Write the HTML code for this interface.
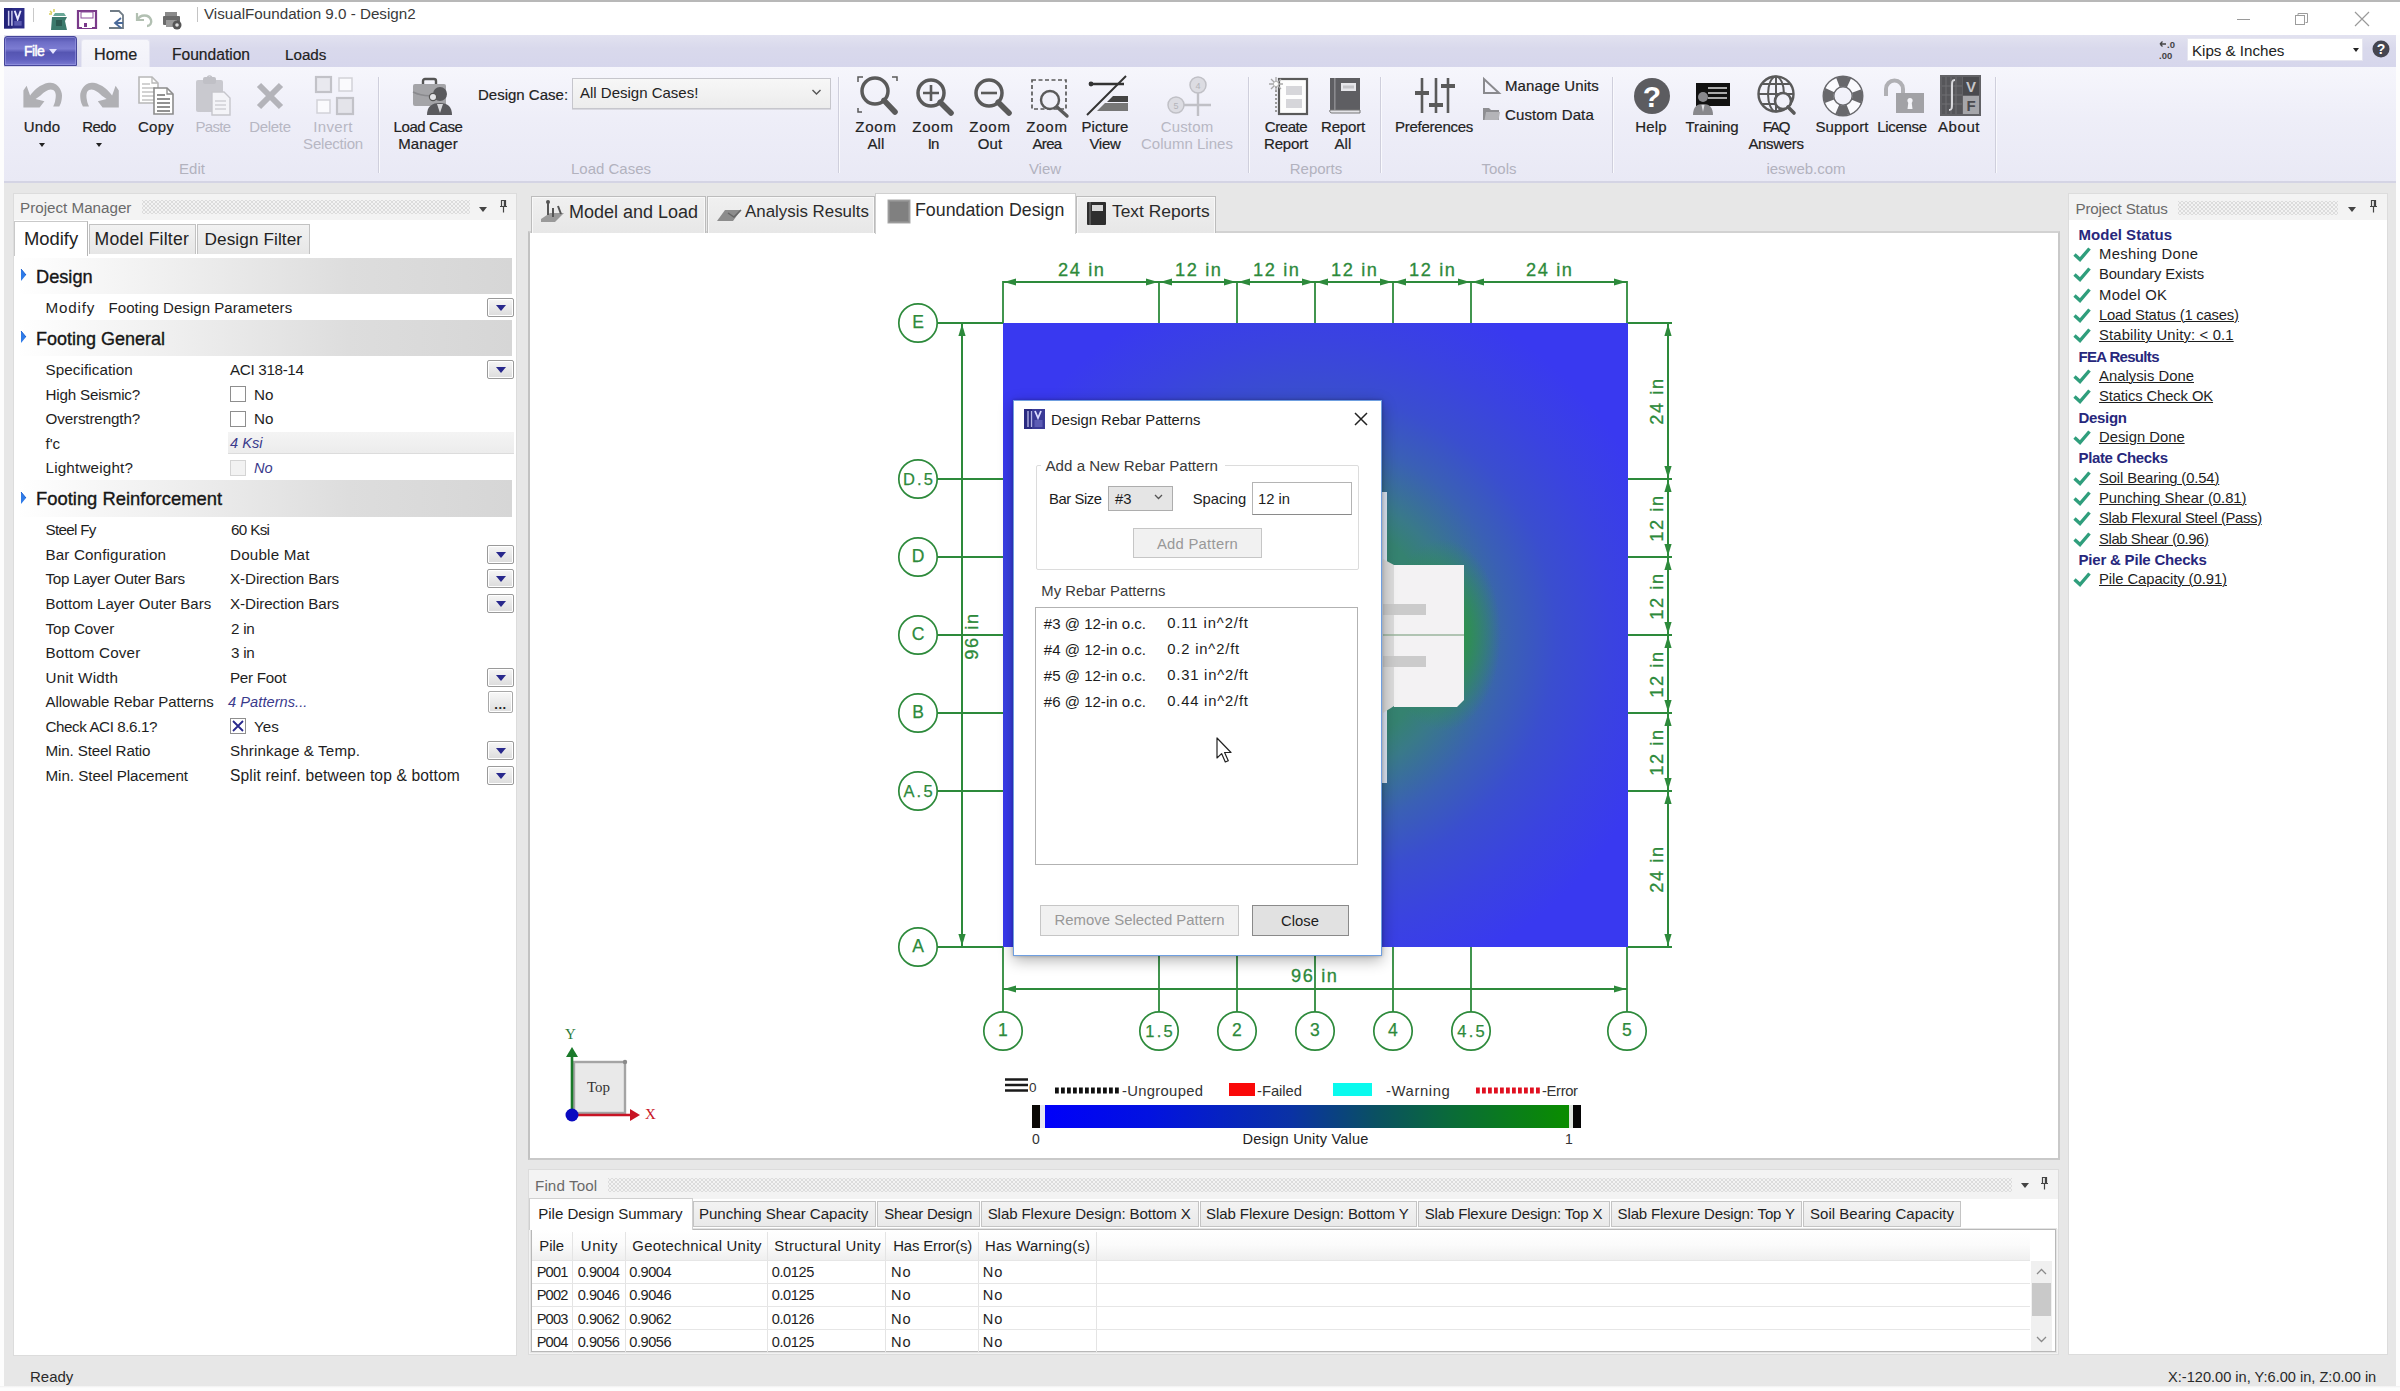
<!DOCTYPE html>
<html>
<head>
<meta charset="utf-8">
<title>VisualFoundation 9.0 - Design2</title>
<style>
*{box-sizing:border-box;margin:0;padding:0}
html,body{width:2400px;height:1391px;overflow:hidden;background:#e7e7e7}
body{font-family:"Liberation Sans",sans-serif;font-size:15px;color:#1a1a1a;position:relative}
.abs{position:absolute}
.t{position:absolute;white-space:pre;line-height:1}
.sb{-webkit-text-stroke:0.35px currentColor}
svg{position:absolute;overflow:visible}
.rl{position:absolute;white-space:pre;line-height:17px;font-size:15px;text-align:center;color:#222;transform:translateX(-50%);-webkit-text-stroke:0.2px currentColor}
.rl.dis{color:#b7b7c3;-webkit-text-stroke:0}
.gl{position:absolute;white-space:pre;font-size:15px;color:#b2b2be;transform:translateX(-50%);line-height:1}
.sep{position:absolute;width:2px;top:77px;height:96px;background:linear-gradient(90deg,#cfcfdc 50%,#f9f9fd 50%)}
.dots{position:absolute;height:14px;background-image:radial-gradient(circle,#dcdcdc 0.8px,transparent 1.25px),radial-gradient(circle,#dcdcdc 0.8px,transparent 1.25px);background-size:4px 4px;background-position:0 0,2px 2px}
.ddb{position:absolute;width:27px;height:19px;border:1px solid #9a9a9a;border-radius:2px;background:linear-gradient(#f6f6f6,#dcdcdc);box-shadow:inset 0 0 0 1px #fff}
.ddb:after{content:"";position:absolute;left:8px;top:6px;border:5px solid transparent;border-top:6px solid #28288c;border-bottom:0}
.hdr{position:absolute;left:18px;width:494px;background:linear-gradient(90deg,#fff 0%,#f6f6f6 17%,#e7e7e7 47%,#dddddd 67%,#d6d6d6 100%)}
.cb{position:absolute;width:16px;height:16px;border:1px solid #8e8e8e;background:#fff}
.tab{position:absolute;border:1px solid #c2c2c2;border-bottom:none;background:linear-gradient(#f2f2f2,#e6e6e6)}
.tab.act{background:#fff;border-color:#d4d4d4}
.lnk{text-decoration:underline;text-decoration-thickness:1px;text-underline-offset:1px}
.btn{position:absolute;border:1px solid #adadad;background:#e1e1e1;text-align:center;white-space:pre}
</style>
</head>
<body>

<div class="abs" style="left:0px;top:0px;width:2400px;height:35px;background:#fff;border-top:2px solid #b8b8b8"></div>
<div class="abs" style="left:0px;top:35px;width:4px;height:1356px;background:#fdfdfd"></div>
<div class="abs" style="left:2396px;top:35px;width:4px;height:1356px;background:#fdfdfd"></div>
<div class="abs" style="left:0px;top:1386px;width:2400px;height:5px;background:linear-gradient(#f0f0f0,#fdfdfd 40%)"></div>
<svg style="left:4px;top:8px" width="22" height="22" viewBox="0 0 22 22"><g transform="scale(0.93)"><rect x="0" y="0" width="22" height="22" fill="#2b2b86"/><rect x="0" y="0" width="9" height="22" fill="#232378"/><path d="M5 3v16M8.5 3v16" stroke="#c9c9ee" stroke-width="1.6" fill="none"/><path d="M11.5 3l3.2 9 3.2-9" stroke="#e8e8ff" stroke-width="2" fill="none"/><rect x="11" y="14" width="8" height="5" fill="#5a5ab0"/></g></svg>
<div class="abs" style="left:33px;top:8px;width:1px;height:14px;background:#c9c9c9"></div>
<svg style="left:48px;top:8px" width="22" height="24" viewBox="0 0 22 24"><path d="M4 9h15l-2 4 2 9H3z" fill="#3c7a6c"/><path d="M5 8l2-3h9l2 3" fill="#6aa898"/><path d="M2 3l2 2M6 1l0 3M1 6l3 0" stroke="#d8d060" stroke-width="1.5"/><rect x="8" y="12" width="6" height="6" fill="#2c5a50"/></svg>
<svg style="left:77px;top:10px" width="20" height="19" viewBox="0 0 20 19"><path d="M1 1h18v17H1z" fill="none" stroke="#7a3a8a" stroke-width="2.2"/><rect x="4" y="2" width="12" height="6" fill="#fff" stroke="#8a4a9a" stroke-width="1"/><rect x="5" y="12" width="10" height="6" fill="#fff"/><rect x="7" y="13" width="3" height="4" fill="#7a3a8a"/></svg>
<svg style="left:108px;top:10px" width="17" height="19" viewBox="0 0 17 19"><path d="M2 1h9l4 4v13H1" fill="none" stroke="#707c86" stroke-width="1.8"/><path d="M13 8l-6 5 6 5M8 13h7" fill="none" stroke="#4a6a9a" stroke-width="1.8"/></svg>
<svg style="left:134px;top:12px" width="19" height="15" viewBox="0 0 19 15"><path d="M3 1v7h7" fill="none" stroke="#b2c0b2" stroke-width="2.2"/><path d="M3.5 8C6 2 15 2 17 8c1 3-1 6-4 6" fill="none" stroke="#b2c0b2" stroke-width="2.4"/></svg>
<svg style="left:162px;top:10px" width="22" height="20" viewBox="0 0 22 20"><rect x="3" y="2" width="12" height="6" fill="#8a8a8a"/><rect x="1" y="6" width="17" height="9" rx="1" fill="#6a6a6a"/><rect x="4" y="10" width="11" height="7" fill="#9a9a9a"/><circle cx="15" cy="15" r="4.5" fill="#555"/><circle cx="15" cy="15" r="1.8" fill="#ddd"/></svg>
<div class="abs" style="left:197px;top:7px;width:1px;height:15px;background:#c4c4c4"></div>
<div class="t" style="left:204px;top:6.0px;font-size:15.2px;color:#3a3a3a;">VisualFoundation 9.0 - Design2</div>
<div class="abs" style="left:2237px;top:19px;width:13px;height:1px;background:#9a9a9a"></div>
<svg style="left:2295px;top:13px" width="13" height="12" viewBox="0 0 13 12"><rect x="0.5" y="2.5" width="9" height="9" fill="none" stroke="#9c9c9c" stroke-width="1"/><path d="M3 2.5v-2h9.5v9h-2" fill="none" stroke="#9c9c9c" stroke-width="1"/></svg>
<svg style="left:2354px;top:11px" width="16" height="16" viewBox="0 0 16 16"><path d="M1 1l14 14M15 1L1 15" stroke="#9a9a9a" stroke-width="1.2"/></svg>
<div class="abs" style="left:4px;top:35px;width:2392px;height:33px;background:linear-gradient(#e2e2f0,#d9d9ec 40%,#d6d6ec)"></div>
<div class="abs" style="left:4px;top:36px;width:73px;height:30px;background:linear-gradient(#5252ac 0%,#6d6dc6 18%,#7c7cd2 42%,#5555b2 55%,#5f5fbe 80%,#7a7ad2 100%);border:1px solid #46469a;border-radius:3px 3px 0 0;box-shadow:inset 0 0 0 1px rgba(160,160,230,.55)"></div>
<div class="t" style="left:24px;top:43.9px;font-size:14px;color:#fff;-webkit-text-stroke:0.45px #fff;letter-spacing:-0.6px">File</div>
<div class="abs" style="left:49px;top:49px;border:4.5px solid transparent;border-top:5px solid #e6e6ff;border-bottom:0"></div>
<div class="abs" style="left:81px;top:39px;width:69px;height:30px;background:linear-gradient(#f6f6fb,#f1f1f9);border-radius:3px 3px 0 0;border:1px solid #e6e6f2;border-bottom:none"></div>
<div class="t" style="left:94px;top:46.3px;font-size:16.2px;color:#222;-webkit-text-stroke:0.2px #222">Home</div>
<div class="t" style="left:172px;top:46.6px;font-size:15.6px;color:#222;-webkit-text-stroke:0.2px #222">Foundation</div>
<div class="t" style="left:285px;top:46.8px;font-size:15.2px;color:#222;-webkit-text-stroke:0.2px #222">Loads</div>
<svg style="left:2157px;top:39px" width="22" height="22" viewBox="0 0 22 22"><path d="M3 5h6M3 5l2.500-2.500M3 5l2.500 2.500" stroke="#444" stroke-width="1.300" fill="none"/><text x="10" y="9" font-size="9.500" font-family="Liberation Sans" font-weight="bold" fill="#444">.0</text><text x="2" y="20" font-size="9.500" font-family="Liberation Sans" font-weight="bold" fill="#444">.00</text></svg>
<div class="abs" style="left:2187px;top:38px;width:176px;height:23px;background:#fff;border:1px solid #e6e6f0"></div>
<div class="t" style="left:2192px;top:43.3px;font-size:15.2px;color:#222;letter-spacing:-0.04px;">Kips &amp; Inches</div>
<div class="abs" style="left:2353px;top:48px;border:3.500px solid transparent;border-top:4px solid #222;border-bottom:0"></div>
<svg style="left:2372px;top:40px" width="18" height="18" viewBox="0 0 18 18"><circle cx="9" cy="9" r="8.5" fill="#45454f"/><text x="9" y="14" text-anchor="middle" font-size="14" font-weight="bold" font-family="Liberation Sans" fill="#fff">?</text></svg>
<div class="abs" style="left:4px;top:67px;width:2392px;height:116px;background:linear-gradient(#f6f6fc,#eeeef8 45%,#e9e9f5 100%);border-bottom:2px solid #d4d4e4"></div>
<svg style="left:0px;top:0px" width="1" height="1" viewBox="0 0 1 1"><path d="M23.400 107.400L23.400 90.600L26.600 85.800L30.100 95.600C34 90 39 86 43.200 84.500C46 83 48.500 82.800 50.700 82.800C55 83 58 85.500 59.500 88.100C61 90.500 62 93 62 95.600C62 98.500 61.500 101 60.800 103.200L59.300 106.400L53.200 106.400C54.500 104 55 102 55.200 100.600C55.700 98 55.900 96 55.700 94.400C55.300 92 54.500 91 53.200 90.100C51.500 89.300 50 89.300 48.200 90.100C45 91.500 42.500 93.500 40.600 95.600L35.600 99.100L44.400 101.200L39.600 107.400Z" fill="#b0b0b4"/></svg>
<div class="t" style="left:42px;top:119.2px;font-size:15px;color:#222;transform:translateX(-50%);-webkit-text-stroke:0.2px #222;letter-spacing:0.18px;">Undo</div>
<div class="abs" style="left:38.5px;top:143px;border:3.500px solid transparent;border-top:4px solid #222;border-bottom:0"></div>
<svg style="left:0px;top:0px" width="1" height="1" viewBox="0 0 1 1"><g transform="translate(142.200,0) scale(-1,1)"><path d="M23.400 107.400L23.400 90.600L26.600 85.800L30.100 95.600C34 90 39 86 43.200 84.500C46 83 48.500 82.800 50.700 82.800C55 83 58 85.500 59.500 88.100C61 90.500 62 93 62 95.600C62 98.500 61.500 101 60.800 103.200L59.300 106.400L53.200 106.400C54.500 104 55 102 55.200 100.600C55.700 98 55.900 96 55.700 94.400C55.300 92 54.500 91 53.200 90.100C51.500 89.300 50 89.300 48.200 90.100C45 91.500 42.500 93.500 40.600 95.600L35.600 99.100L44.400 101.200L39.600 107.400Z" fill="#b0b0b4"/></g></svg>
<div class="t" style="left:99px;top:119.2px;font-size:15px;color:#222;transform:translateX(-50%);-webkit-text-stroke:0.2px #222;letter-spacing:-0.62px;">Redo</div>
<div class="abs" style="left:95.5px;top:143px;border:3.500px solid transparent;border-top:4px solid #222;border-bottom:0"></div>
<svg style="left:138px;top:76px" width="22" height="28" viewBox="0 0 22 28"><path d="M1 1h13l6 6v20H1z" fill="#fff" stroke="#b8b8b8" stroke-width="1.6"/><path d="M14 1v6h6" fill="none" stroke="#b8b8b8" stroke-width="1.3"/><path d="M4 8h8M4 12h13M4 16h13M4 20h13M4 24h13" stroke="#c4c4c4" stroke-width="1.5"/></svg>
<svg style="left:153px;top:87px" width="22" height="28" viewBox="0 0 22 28"><path d="M1 1h13l6 6v20H1z" fill="#fff" stroke="#8c8c8c" stroke-width="1.6"/><path d="M14 1v6h6" fill="none" stroke="#8c8c8c" stroke-width="1.3"/><path d="M4 8h8M4 12h13M4 16h13M4 20h13M4 24h13" stroke="#6e6e6e" stroke-width="1.5"/></svg>
<div class="t" style="left:156px;top:119.2px;font-size:15px;color:#222;transform:translateX(-50%);-webkit-text-stroke:0.2px #222;letter-spacing:0.23px;">Copy</div>
<svg style="left:195px;top:75px" width="38" height="41" viewBox="0 0 38 41"><rect x="1" y="5" width="27" height="32" rx="2" fill="#c9c9cf"/><rect x="8" y="2" width="13" height="7" rx="2" fill="#c0c0c6"/><circle cx="14.5" cy="3" r="2.2" fill="none" stroke="#c0c0c6" stroke-width="1.3"/><path d="M17 17h12l6 6v17H17z" fill="#f4f4f8" stroke="#c6c6cc" stroke-width="1.4"/><path d="M20 26h11M20 30h11M20 34h11" stroke="#cfcfd5" stroke-width="1.4"/></svg>
<div class="t" style="left:213px;top:119.2px;font-size:15px;color:#b7b7c3;transform:translateX(-50%);letter-spacing:-0.64px;">Paste</div>
<svg style="left:256px;top:82px" width="28" height="28" viewBox="0 0 28 28"><path d="M3 3L25 25M25 3L3 25" stroke="#b4b4ba" stroke-width="6"/></svg>
<div class="t" style="left:270px;top:119.2px;font-size:15px;color:#b7b7c3;transform:translateX(-50%);letter-spacing:-0.31px;">Delete</div>
<svg style="left:314px;top:75px" width="42" height="42" viewBox="0 0 42 42"><rect x="2" y="2" width="15" height="15" fill="#e9e9ef" stroke="#c2c2c8" stroke-width="2.2"/><rect x="25" y="3" width="13" height="13" fill="#fafafd" stroke="#d2d2d8" stroke-width="1.5"/><rect x="3" y="25" width="13" height="13" fill="#fafafd" stroke="#d2d2d8" stroke-width="1.5"/><rect x="23" y="23" width="16" height="16" fill="#e4e4ea" stroke="#c2c2c8" stroke-width="2.2"/></svg>
<div class="t" style="left:333px;top:119.2px;font-size:15px;color:#b7b7c3;transform:translateX(-50%);letter-spacing:0.30px;">Invert</div>
<div class="t" style="left:333px;top:136.0px;font-size:15px;color:#b7b7c3;transform:translateX(-50%);letter-spacing:-0.21px;">Selection</div>
<div class="gl" style="left:192px;top:161px">Edit</div>
<div class="sep" style="left:378px"></div>
<svg style="left:411px;top:77px" width="42" height="40" viewBox="0 0 42 40"><path d="M12 7v-3a2 2 0 0 1 2-2h9a2 2 0 0 1 2 2v3" fill="none" stroke="#555" stroke-width="2.4"/><rect x="2" y="7" width="33" height="22" rx="2" fill="#a4a4a8"/><path d="M2 15c10 5 23 5 33 0" fill="none" stroke="#8a8a8e" stroke-width="1.4"/><circle cx="29" cy="17" r="7" fill="#5a5a5e"/><path d="M16 38c0-9 5-12 13-12s12 4 12 12z" fill="#5a5a5e"/><path d="M26 27l3 9 3-9z" fill="#d8d8dc"/><circle cx="22" cy="20" r="3.6" fill="#e4e4e8" stroke="#555" stroke-width="1.2"/></svg>
<div class="t" style="left:428px;top:119.2px;font-size:15px;color:#222;transform:translateX(-50%);-webkit-text-stroke:0.2px #222;letter-spacing:-0.39px;">Load Case</div>
<div class="t" style="left:428px;top:136.0px;font-size:15px;color:#222;transform:translateX(-50%);-webkit-text-stroke:0.2px #222;letter-spacing:0.03px;">Manager</div>
<div class="t" style="left:478px;top:86.9px;font-size:15px;color:#222;-webkit-text-stroke:0.2px #222">Design Case:</div>
<div class="abs" style="left:572px;top:78px;width:259px;height:31px;background:linear-gradient(#f7f7f7,#ececec);border:1px solid #c6c6cc;box-shadow:0 1px 0 #d8d8e0"></div>
<div class="t" style="left:580px;top:84.9px;font-size:15px;color:#222;">All Design Cases!</div>
<svg style="left:811px;top:89px" width="11" height="7" viewBox="0 0 11 7"><path d="M1.5 1l4 4 4-4" fill="none" stroke="#555" stroke-width="1.4"/></svg>
<div class="gl" style="left:611px;top:161px">Load Cases</div>
<div class="sep" style="left:838px"></div>
<svg style="left:0px;top:0px" width="1" height="1" viewBox="0 0 1 1"><circle cx="875" cy="91" r="13" fill="none" stroke="#5a5a5a" stroke-width="3.5"/><path d="M884.0 100.4L895 112" stroke="#5a5a5a" stroke-width="5.6" stroke-linecap="round"/><path d="M858 82v-5h5M892 77h5v4M858 108v4h4" fill="none" stroke="#5a5a5a" stroke-width="1.5"/></svg>
<div class="t" style="left:876px;top:119.2px;font-size:15px;color:#222;transform:translateX(-50%);-webkit-text-stroke:0.2px #222;letter-spacing:0.82px;">Zoom</div>
<div class="t" style="left:876px;top:136.0px;font-size:15px;color:#222;transform:translateX(-50%);-webkit-text-stroke:0.2px #222;letter-spacing:0.16px;">All</div>
<svg style="left:0px;top:0px" width="1" height="1" viewBox="0 0 1 1"><circle cx="931" cy="93" r="13" fill="none" stroke="#5a5a5a" stroke-width="3.5"/><path d="M940.2 102.2L951 113" stroke="#5a5a5a" stroke-width="5.6" stroke-linecap="round"/><path d="M923 93h16M931 85v16" stroke="#5a5a5a" stroke-width="2.6"/></svg>
<div class="t" style="left:933px;top:119.2px;font-size:15px;color:#222;transform:translateX(-50%);-webkit-text-stroke:0.2px #222;letter-spacing:0.82px;">Zoom</div>
<div class="t" style="left:933px;top:136.0px;font-size:15px;color:#222;transform:translateX(-50%);-webkit-text-stroke:0.2px #222;letter-spacing:-1.11px;">In</div>
<svg style="left:0px;top:0px" width="1" height="1" viewBox="0 0 1 1"><circle cx="989" cy="93" r="13" fill="none" stroke="#5a5a5a" stroke-width="3.5"/><path d="M998.2 102.2L1009 113" stroke="#5a5a5a" stroke-width="5.6" stroke-linecap="round"/><path d="M981 93h16" stroke="#5a5a5a" stroke-width="2.6"/></svg>
<div class="t" style="left:990px;top:119.2px;font-size:15px;color:#222;transform:translateX(-50%);-webkit-text-stroke:0.2px #222;letter-spacing:0.82px;">Zoom</div>
<div class="t" style="left:990px;top:136.0px;font-size:15px;color:#222;transform:translateX(-50%);-webkit-text-stroke:0.2px #222;letter-spacing:0.16px;">Out</div>
<svg style="left:0px;top:0px" width="1" height="1" viewBox="0 0 1 1"><rect x="1032" y="80" width="34" height="29" fill="none" stroke="#5a5a5a" stroke-width="1.7" stroke-dasharray="4 2.5"/><circle cx="1050" cy="100" r="9" fill="#f0f0f8" stroke="#5a5a5a" stroke-width="2.4"/><path d="M1057 107l10 9" stroke="#5a5a5a" stroke-width="3.4" stroke-linecap="round"/></svg>
<div class="t" style="left:1047px;top:119.2px;font-size:15px;color:#222;transform:translateX(-50%);-webkit-text-stroke:0.2px #222;letter-spacing:0.82px;">Zoom</div>
<div class="t" style="left:1047px;top:136.0px;font-size:15px;color:#222;transform:translateX(-50%);-webkit-text-stroke:0.2px #222;letter-spacing:-0.63px;">Area</div>
<svg style="left:0px;top:0px" width="1" height="1" viewBox="0 0 1 1"><path d="M1091 84h33" stroke="#333" stroke-width="2.6"/><circle cx="1091" cy="84" r="2.4" fill="#333"/><path d="M1126 76L1087 115" stroke="#333" stroke-width="2"/><path d="M1113 96h15v6h-21z" fill="#444"/><path d="M1105 103h23v8h-31z" fill="#777"/></svg>
<div class="t" style="left:1105px;top:119.2px;font-size:15px;color:#222;transform:translateX(-50%);-webkit-text-stroke:0.2px #222;letter-spacing:0.04px;">Picture</div>
<div class="t" style="left:1105px;top:136.0px;font-size:15px;color:#222;transform:translateX(-50%);-webkit-text-stroke:0.2px #222;letter-spacing:-0.25px;">View</div>
<svg style="left:0px;top:0px" width="1" height="1" viewBox="0 0 1 1"><circle cx="1198" cy="85" r="8" fill="#dcdce2" stroke="#c0c0c6" stroke-width="1.5"/><circle cx="1176" cy="105" r="8" fill="#dcdce2" stroke="#c0c0c6" stroke-width="1.5"/><path d="M1198 93v23M1184 105h27" stroke="#c0c0c6" stroke-width="2.4"/><text x="1198" y="89" font-size="9" text-anchor="middle" fill="#b4b4ba" font-family="Liberation Sans">4</text><text x="1176" y="109" font-size="9" text-anchor="middle" fill="#b4b4ba" font-family="Liberation Sans">5</text></svg>
<div class="t" style="left:1187px;top:119.2px;font-size:15px;color:#b7b7c3;transform:translateX(-50%);letter-spacing:0.16px;">Custom</div>
<div class="t" style="left:1187px;top:136.0px;font-size:15px;color:#b7b7c3;transform:translateX(-50%);letter-spacing:0.02px;">Column Lines</div>
<div class="gl" style="left:1045px;top:161px">View</div>
<div class="sep" style="left:1248px"></div>
<svg style="left:0px;top:0px" width="1" height="1" viewBox="0 0 1 1"><rect x="1279" y="79" width="28" height="35" fill="#fdfdfd" stroke="#5a5a5a" stroke-width="2.2"/><rect x="1286" y="86" width="16" height="9" fill="#d6d6da"/><rect x="1286" y="99" width="16" height="9" fill="#d6d6da"/><path d="M1276 82v30" stroke="#999" stroke-width="2" stroke-dasharray="2 2"/><path d="M1276 77v14M1269 84h14M1271 79l10 10M1281 79l-10 10" stroke="#a8a8a8" stroke-width="1.3"/><circle cx="1276" cy="84" r="2.6" fill="#fff" stroke="#aaa" stroke-width="0.8"/></svg>
<div class="t" style="left:1286px;top:119.2px;font-size:15px;color:#222;transform:translateX(-50%);-webkit-text-stroke:0.2px #222;letter-spacing:-0.42px;">Create</div>
<div class="t" style="left:1286px;top:136.0px;font-size:15px;color:#222;transform:translateX(-50%);-webkit-text-stroke:0.2px #222;letter-spacing:-0.16px;">Report</div>
<svg style="left:0px;top:0px" width="1" height="1" viewBox="0 0 1 1"><path d="M1330 78h30v32h-30z" fill="#5e5e62"/><path d="M1330 110h30v3h-28a2 2 0 0 1 -2-3z" fill="#e4e4e8" stroke="#777" stroke-width="1"/><rect x="1334" y="78" width="1.6" height="32" fill="#8a8a8e"/><rect x="1341" y="83" width="15" height="8" fill="#e6e6ea"/><rect x="1343" y="85.5" width="11" height="3" fill="#c4c4c8"/></svg>
<div class="t" style="left:1343px;top:119.2px;font-size:15px;color:#222;transform:translateX(-50%);-webkit-text-stroke:0.2px #222;letter-spacing:-0.16px;">Report</div>
<div class="t" style="left:1343px;top:136.0px;font-size:15px;color:#222;transform:translateX(-50%);-webkit-text-stroke:0.2px #222;letter-spacing:0.16px;">All</div>
<div class="gl" style="left:1316px;top:161px">Reports</div>
<div class="sep" style="left:1380px"></div>
<svg style="left:0px;top:0px" width="1" height="1" viewBox="0 0 1 1"><path d="M1422 78v35M1436 78v35M1448 78v35" stroke="#5a5a5a" stroke-width="2.6"/><path d="M1415 93h14M1429 105h14M1441 86h14" stroke="#5a5a5a" stroke-width="4.2"/></svg>
<div class="t" style="left:1434px;top:119.2px;font-size:15px;color:#222;transform:translateX(-50%);-webkit-text-stroke:0.2px #222;letter-spacing:-0.25px;">Preferences</div>
<svg style="left:0px;top:0px" width="1" height="1" viewBox="0 0 1 1"><path d="M1484 79v14h15z" fill="none" stroke="#8a8a8e" stroke-width="2"/></svg>
<div class="t" style="left:1505px;top:78.4px;font-size:15px;color:#222;-webkit-text-stroke:0.2px #222;letter-spacing:0.12px;">Manage Units</div>
<svg style="left:0px;top:0px" width="1" height="1" viewBox="0 0 1 1"><path d="M1483 108h6l2 2h8v10h-16z" fill="#8e8e92"/><path d="M1486 112h14l-1.5 8h-14z" fill="#b4b4b8"/></svg>
<div class="t" style="left:1505px;top:106.9px;font-size:15px;color:#222;-webkit-text-stroke:0.2px #222;letter-spacing:0.12px;">Custom Data</div>
<div class="gl" style="left:1499px;top:161px">Tools</div>
<div class="sep" style="left:1612px"></div>
<svg style="left:0px;top:0px" width="1" height="1" viewBox="0 0 1 1"><circle cx="1652" cy="96" r="18" fill="#5c5c60"/><text x="1652" y="107" font-size="30" font-weight="bold" text-anchor="middle" fill="#fff" font-family="Liberation Sans">?</text></svg>
<div class="t" style="left:1651px;top:119.2px;font-size:15px;color:#222;transform:translateX(-50%);-webkit-text-stroke:0.2px #222;letter-spacing:0.12px;">Help</div>
<svg style="left:0px;top:0px" width="1" height="1" viewBox="0 0 1 1"><rect x="1696" y="83" width="34" height="23" fill="#111"/><path d="M1708 88h19M1708 93h19M1708 98h19" stroke="#ddd" stroke-width="1.5"/><circle cx="1703" cy="97" r="5" fill="#88888c"/><path d="M1693 115c0-8 4-11 10-11s10 3 10 11z" fill="#88888c"/><path d="M1701.500 105l1.500 7 1.500-7z" fill="#e0e0e4"/></svg>
<div class="t" style="left:1712px;top:119.2px;font-size:15px;color:#222;transform:translateX(-50%);-webkit-text-stroke:0.2px #222;letter-spacing:-0.09px;">Training</div>
<svg style="left:0px;top:0px" width="1" height="1" viewBox="0 0 1 1"><circle cx="1776" cy="94" r="17.500" fill="none" stroke="#5a5a5a" stroke-width="2.4"/><ellipse cx="1776" cy="94" rx="8" ry="17.500" fill="none" stroke="#5a5a5a" stroke-width="2"/><path d="M1758.500 94h35M1776 76.500v35M1762 84h28M1762 104h28" stroke="#5a5a5a" stroke-width="2"/><circle cx="1783" cy="101" r="8" fill="#f0f0f8" stroke="#5a5a5a" stroke-width="2.6"/><path d="M1788 107l6 6" stroke="#5a5a5a" stroke-width="3.6" stroke-linecap="round"/></svg>
<div class="t" style="left:1776px;top:119.2px;font-size:15px;color:#222;transform:translateX(-50%);-webkit-text-stroke:0.2px #222;letter-spacing:-1.15px;">FAQ</div>
<div class="t" style="left:1776px;top:136.0px;font-size:15px;color:#222;transform:translateX(-50%);-webkit-text-stroke:0.2px #222;letter-spacing:-0.35px;">Answers</div>
<svg style="left:0px;top:0px" width="1" height="1" viewBox="0 0 1 1"><circle cx="1843" cy="96" r="14.500" fill="none" stroke="#fafafe" stroke-width="10"/><circle cx="1843" cy="96" r="14.500" fill="none" stroke="#68686c" stroke-width="10" stroke-dasharray="11.400 11.400" stroke-dashoffset="5.700"/><circle cx="1843" cy="96" r="19.800" fill="none" stroke="#68686c" stroke-width="1.400"/><circle cx="1843" cy="96" r="9.200" fill="none" stroke="#68686c" stroke-width="1.400"/></svg>
<div class="t" style="left:1842px;top:119.2px;font-size:15px;color:#222;transform:translateX(-50%);-webkit-text-stroke:0.2px #222;letter-spacing:0.08px;">Support</div>
<svg style="left:0px;top:0px" width="1" height="1" viewBox="0 0 1 1"><path d="M1886 96v-7a8.500 8.500 0 0 1 17 0v10" fill="none" stroke="#b0b0b4" stroke-width="4"/><rect x="1896" y="93" width="28" height="20" fill="#a2a2a6"/><circle cx="1910" cy="100.500" r="2.600" fill="#f4f4f8"/><path d="M1908.500 101h3l1 8h-5z" fill="#f4f4f8"/></svg>
<div class="t" style="left:1902px;top:119.2px;font-size:15px;color:#222;transform:translateX(-50%);-webkit-text-stroke:0.2px #222;letter-spacing:-0.30px;">License</div>
<svg style="left:0px;top:0px" width="1" height="1" viewBox="0 0 1 1"><rect x="1940" y="75" width="41" height="41" fill="#626266"/><rect x="1942" y="77" width="20" height="37" fill="#56565a"/><path d="M1946 77v37M1951 77v37M1956 77v37M1942 86h20M1942 95h20M1942 104h20" stroke="#6e6e72" stroke-width="1"/><path d="M1949 110c3 0 3-2 3-6v-18c0-4 0-6 3-6" fill="none" stroke="#d8d8dc" stroke-width="2"/><rect x="1963" y="77" width="16" height="18" fill="#4a4a4e"/><rect x="1963" y="96" width="16" height="18" fill="#a6a6aa"/><text x="1971" y="92" font-size="15" font-weight="bold" text-anchor="middle" fill="#c6c6ca" font-family="Liberation Sans">V</text><text x="1971" y="111" font-size="15" font-weight="bold" text-anchor="middle" fill="#4a4a4e" font-family="Liberation Sans">F</text></svg>
<div class="t" style="left:1959px;top:119.2px;font-size:15px;color:#222;transform:translateX(-50%);-webkit-text-stroke:0.2px #222;letter-spacing:0.60px;">About</div>
<div class="gl" style="left:1806px;top:161px">iesweb.com</div>
<div class="sep" style="left:1995px"></div>
<div class="abs" style="left:13px;top:193px;width:504px;height:1163px;background:#fff;border:1px solid #dcdcdc"></div>
<div class="abs" style="left:14px;top:194px;width:502px;height:26px;background:#f3f3f3"></div>
<div class="t" style="left:20px;top:200.3px;font-size:15.2px;color:#6a6a6a;">Project Manager</div>
<div class="dots" style="left:142px;top:200px;width:328px"></div>
<div class="abs" style="left:479px;top:207px;border:4.5px solid transparent;border-top:5px solid #444;border-bottom:0"></div>
<svg style="left:499px;top:200px" width="9" height="13" viewBox="0 0 9 13"><path d="M2.500 0.500h4v6h-4zM1 6.500h7M4.500 6.500v6" fill="none" stroke="#444" stroke-width="1.2"/><path d="M5.500 1v5" stroke="#444" stroke-width="1.4"/></svg>
<div class="tab" style="left:89px;top:224px;width:107px;height:30px"></div>
<div class="tab" style="left:197px;top:224px;width:113px;height:30px"></div>
<div class="tab act" style="left:14px;top:221px;width:74px;height:35px;border-color:#c9c9c9;border-right-color:#b6b6b6"></div>
<div class="t" style="left:24px;top:229.8px;font-size:18.4px;color:#222;">Modify</div>
<div class="t" style="left:94.5px;top:231.1px;font-size:17.6px;color:#222;letter-spacing:0.22px;">Model Filter</div>
<div class="t" style="left:204.5px;top:231.3px;font-size:17.2px;color:#222;letter-spacing:0.09px;">Design Filter</div>
<div class="hdr" style="top:258px;height:36px"></div>
<svg style="left:20px;top:268.0px" width="8" height="14" viewBox="0 0 8 14"><path d="M1 1l5 6-5 6z" fill="#2f7be8"/><path d="M1 1l5 6" stroke="#1a5fd0" stroke-width="1"/></svg>
<div class="t sb" style="left:36px;top:267.9px;font-size:18.2px;color:#161616;">Design</div>
<div class="hdr" style="top:320px;height:36px"></div>
<svg style="left:20px;top:330.0px" width="8" height="14" viewBox="0 0 8 14"><path d="M1 1l5 6-5 6z" fill="#2f7be8"/><path d="M1 1l5 6" stroke="#1a5fd0" stroke-width="1"/></svg>
<div class="t sb" style="left:36px;top:329.9px;font-size:18px;color:#161616;">Footing General</div>
<div class="hdr" style="top:480px;height:37px"></div>
<svg style="left:20px;top:490.5px" width="8" height="14" viewBox="0 0 8 14"><path d="M1 1l5 6-5 6z" fill="#2f7be8"/><path d="M1 1l5 6" stroke="#1a5fd0" stroke-width="1"/></svg>
<div class="t sb" style="left:36px;top:490.3px;font-size:18.4px;color:#161616;">Footing Reinforcement</div>
<div class="t" style="left:45.5px;top:300.3px;font-size:15.2px;color:#1e1e1e;letter-spacing:0.81px;">Modify</div>
<div class="t" style="left:108.6px;top:300.4px;font-size:15px;color:#1e1e1e;letter-spacing:0.04px;">Footing Design Parameters</div>
<div class="ddb" style="left:487px;top:298px"></div>
<div class="t" style="left:45.5px;top:362.3px;font-size:15.2px;color:#1e1e1e;letter-spacing:0.10px;">Specification</div>
<div class="t" style="left:230px;top:362.3px;font-size:15.2px;color:#1e1e1e;letter-spacing:-0.32px;">ACI 318-14</div>
<div class="ddb" style="left:487px;top:360.0px"></div>
<div class="t" style="left:45.5px;top:386.8px;font-size:15.2px;color:#1e1e1e;letter-spacing:-0.20px;">High Seismic?</div>
<div class="cb" style="left:230px;top:386px"></div>
<div class="t" style="left:254px;top:386.8px;font-size:15.2px;color:#1e1e1e;">No</div>
<div class="t" style="left:45.5px;top:411.3px;font-size:15.2px;color:#1e1e1e;letter-spacing:-0.13px;">Overstrength?</div>
<div class="cb" style="left:230px;top:410.5px"></div>
<div class="t" style="left:254px;top:411.3px;font-size:15.2px;color:#1e1e1e;">No</div>
<div class="abs" style="left:228px;top:432px;width:286px;height:22px;background:linear-gradient(#f4f4f4,#ececec);border-bottom:1px solid #dcdcdc"></div>
<div class="t" style="left:45.5px;top:435.8px;font-size:15.2px;color:#1e1e1e;">f'c</div>
<div class="t" style="left:230px;top:436.1px;font-size:14.6px;color:#3a3a8c;font-style:italic;">4 Ksi</div>
<div class="t" style="left:45.5px;top:460.3px;font-size:15.2px;color:#1e1e1e;letter-spacing:0.19px;">Lightweight?</div>
<div class="cb" style="left:230px;top:459.5px;border-color:#d4d4d4;background:#f2f2f2"></div>
<div class="t" style="left:254px;top:460.6px;font-size:14.6px;color:#3a3a8c;font-style:italic;">No</div>
<div class="t" style="left:45.5px;top:522.3px;font-size:15.2px;color:#1e1e1e;letter-spacing:-0.68px;">Steel Fy</div>
<div class="t" style="left:231px;top:522.3px;font-size:15.2px;color:#1e1e1e;letter-spacing:-0.65px;">60 Ksi</div>
<div class="t" style="left:45.5px;top:546.8px;font-size:15.2px;color:#1e1e1e;letter-spacing:0.14px;">Bar Configuration</div>
<div class="t" style="left:230px;top:546.8px;font-size:15.2px;color:#1e1e1e;letter-spacing:0.19px;">Double Mat</div>
<div class="ddb" style="left:487px;top:544.5px"></div>
<div class="t" style="left:45.5px;top:571.3px;font-size:15.2px;color:#1e1e1e;letter-spacing:-0.25px;">Top Layer Outer Bars</div>
<div class="t" style="left:230px;top:571.3px;font-size:15.2px;color:#1e1e1e;letter-spacing:-0.09px;">X-Direction Bars</div>
<div class="ddb" style="left:487px;top:569.0px"></div>
<div class="t" style="left:45.5px;top:595.9px;font-size:15px;color:#1e1e1e;letter-spacing:-0.01px;">Bottom Layer Outer Bars</div>
<div class="t" style="left:230px;top:595.8px;font-size:15.2px;color:#1e1e1e;letter-spacing:-0.09px;">X-Direction Bars</div>
<div class="ddb" style="left:487px;top:593.5px"></div>
<div class="t" style="left:45.5px;top:620.8px;font-size:15.2px;color:#1e1e1e;letter-spacing:-0.06px;">Top Cover</div>
<div class="t" style="left:231px;top:620.8px;font-size:15.2px;color:#1e1e1e;letter-spacing:-0.27px;">2 in</div>
<div class="t" style="left:45.5px;top:645.3px;font-size:15.2px;color:#1e1e1e;letter-spacing:0.17px;">Bottom Cover</div>
<div class="t" style="left:231px;top:645.3px;font-size:15.2px;color:#1e1e1e;letter-spacing:-0.27px;">3 in</div>
<div class="t" style="left:45.5px;top:669.8px;font-size:15.2px;color:#1e1e1e;letter-spacing:0.27px;">Unit Width</div>
<div class="t" style="left:230px;top:669.8px;font-size:15.2px;color:#1e1e1e;letter-spacing:-0.27px;">Per Foot</div>
<div class="ddb" style="left:487px;top:667.5px"></div>
<div class="t" style="left:45.5px;top:694.4px;font-size:15px;color:#1e1e1e;letter-spacing:-0.04px;">Allowable Rebar Patterns</div>
<div class="t" style="left:228px;top:694.6px;font-size:14.6px;color:#3a3a8c;font-style:italic;letter-spacing:0.06px;">4 Patterns...</div>
<div class="abs" style="left:488px;top:690.5px;width:25px;height:22px;border:1px solid #a8a8a8;border-radius:2px;background:linear-gradient(#f8f8f8,#dedede);box-shadow:inset 0 0 0 1px #fff"></div>
<div class="t" style="left:500.5px;top:698.3px;font-size:13px;color:#222;transform:translateX(-50%);font-weight:bold;letter-spacing:0.5px">...</div>
<div class="t" style="left:45.5px;top:718.8px;font-size:15.2px;color:#1e1e1e;letter-spacing:-0.42px;">Check ACI 8.6.1?</div>
<div class="cb" style="left:230px;top:718px"></div>
<svg style="left:230px;top:718px" width="16" height="16" viewBox="0 0 16 16"><path d="M3 3l10 10M13 3L3 13" stroke="#28288c" stroke-width="1.8"/></svg>
<div class="t" style="left:254px;top:718.8px;font-size:15.2px;color:#1e1e1e;">Yes</div>
<div class="t" style="left:45.5px;top:743.3px;font-size:15.2px;color:#1e1e1e;letter-spacing:-0.15px;">Min. Steel Ratio</div>
<div class="t" style="left:230px;top:743.3px;font-size:15.2px;color:#1e1e1e;letter-spacing:0.12px;">Shrinkage &amp; Temp.</div>
<div class="ddb" style="left:487px;top:741.0px"></div>
<div class="t" style="left:45.5px;top:767.8px;font-size:15.2px;color:#1e1e1e;letter-spacing:-0.05px;">Min. Steel Placement</div>
<div class="t" style="left:230px;top:767.6px;font-size:15.6px;color:#1e1e1e;letter-spacing:0.14px;">Split reinf. between top &amp; bottom</div>
<div class="ddb" style="left:487px;top:765.5px"></div>
<div class="abs" style="left:528px;top:231px;width:1532px;height:929px;background:#fff;border:2px solid #c9c9c9;border-top-color:#d2d2d2;border-left-color:#c2c2c2"></div>
<div class="tab" style="left:531px;top:196px;width:175px;height:37px;border-color:#bcbcbc;background:linear-gradient(#f0f0f0,#e7e7e7);box-shadow:inset 1px 1px 0 #f8f8f8,inset -1px 0 0 #f8f8f8"></div>
<div class="tab" style="left:707px;top:196px;width:168px;height:37px;border-color:#bcbcbc;background:linear-gradient(#f0f0f0,#e7e7e7);box-shadow:inset 1px 1px 0 #f8f8f8,inset -1px 0 0 #f8f8f8"></div>
<div class="tab" style="left:1076px;top:196px;width:140px;height:37px;border-color:#bcbcbc;background:linear-gradient(#f0f0f0,#e7e7e7);box-shadow:inset 1px 1px 0 #f8f8f8,inset -1px 0 0 #f8f8f8"></div>
<div class="tab act" style="left:875px;top:193px;width:201px;height:41px;border-color:#d0d0d0"></div>
<div class="t" style="left:569px;top:202.9px;font-size:18px;color:#2a2a2a;">Model and Load</div>
<div class="t" style="left:745px;top:203.5px;font-size:16.9px;color:#2a2a2a;">Analysis Results</div>
<div class="t" style="left:915px;top:201.5px;font-size:17.8px;color:#2a2a2a;">Foundation Design</div>
<div class="t" style="left:1112px;top:203.2px;font-size:17.4px;color:#2a2a2a;">Text Reports</div>
<svg style="left:0px;top:0px" width="1" height="1" viewBox="0 0 1 1"><path d="M541 219l9-6h14l-9 9h-14z" fill="#9a9a9a"/><path d="M548 203v12M553 208v9M558 206l3 8" stroke="#555" stroke-width="2"/><circle cx="548" cy="202" r="2" fill="#555"/><path d="M717 221l8-11h16l-8 11z" fill="#8c8c8c"/><path d="M728 213l6 4 7-7" stroke="#666" stroke-width="1.5" fill="none"/><rect x="888" y="200" width="22" height="23" fill="#8e8e8e" stroke="#a8a8a8" stroke-width="1"/><rect x="890" y="202" width="18" height="19" fill="#808080"/><rect x="1087" y="202" width="19" height="23" rx="1" fill="#2e2e2e"/><rect x="1092" y="205" width="11" height="6" fill="#d8d8d8"/><rect x="1089" y="202" width="2" height="23" fill="#555"/></svg>
<div class="abs" style="left:1003px;top:323px;width:625px;height:624px;background:radial-gradient(ellipse 58px 96px at 440px 312px,#2f8f52 0%,#2f8f52 40%,rgba(47,143,82,0) 100%),radial-gradient(circle 360px at 312px 312px,#33856c 0%,#358270 33%,#397a88 40%,#3a60b5 54%,#3a4ecf 67%,#3a43e0 82%,#3939f0 100%)"></div>
<svg style="left:0px;top:0px" width="1" height="1" viewBox="0 0 1 1"><path d="M1003 282L1627 282" stroke="#2d8a3b" stroke-width="2" fill="none"/><path d="M1003 281L1003 323" stroke="#2d8a3b" stroke-width="1.8" fill="none"/><path d="M1159 281L1159 323" stroke="#2d8a3b" stroke-width="1.8" fill="none"/><path d="M1237 281L1237 323" stroke="#2d8a3b" stroke-width="1.8" fill="none"/><path d="M1315 281L1315 323" stroke="#2d8a3b" stroke-width="1.8" fill="none"/><path d="M1393 281L1393 323" stroke="#2d8a3b" stroke-width="1.8" fill="none"/><path d="M1471 281L1471 323" stroke="#2d8a3b" stroke-width="1.8" fill="none"/><path d="M1627 281L1627 323" stroke="#2d8a3b" stroke-width="1.8" fill="none"/><path d="M1004 282l12 -3.6v7.2z" fill="#2d8a3b"/><path d="M1158 282l-12 -3.6v7.2z" fill="#2d8a3b"/><path d="M1160 282l12 -3.6v7.2z" fill="#2d8a3b"/><path d="M1236 282l-12 -3.6v7.2z" fill="#2d8a3b"/><path d="M1238 282l12 -3.6v7.2z" fill="#2d8a3b"/><path d="M1314 282l-12 -3.6v7.2z" fill="#2d8a3b"/><path d="M1316 282l12 -3.6v7.2z" fill="#2d8a3b"/><path d="M1392 282l-12 -3.6v7.2z" fill="#2d8a3b"/><path d="M1394 282l12 -3.6v7.2z" fill="#2d8a3b"/><path d="M1470 282l-12 -3.6v7.2z" fill="#2d8a3b"/><path d="M1472 282l12 -3.6v7.2z" fill="#2d8a3b"/><path d="M1626 282l-12 -3.6v7.2z" fill="#2d8a3b"/><path d="M1668 323L1668 947" stroke="#2d8a3b" stroke-width="2" fill="none"/><path d="M1628 323L1672 323" stroke="#2d8a3b" stroke-width="1.8" fill="none"/><path d="M1628 479L1672 479" stroke="#2d8a3b" stroke-width="1.8" fill="none"/><path d="M1628 557L1672 557" stroke="#2d8a3b" stroke-width="1.8" fill="none"/><path d="M1628 635L1672 635" stroke="#2d8a3b" stroke-width="1.8" fill="none"/><path d="M1628 713L1672 713" stroke="#2d8a3b" stroke-width="1.8" fill="none"/><path d="M1628 791L1672 791" stroke="#2d8a3b" stroke-width="1.8" fill="none"/><path d="M1628 947L1672 947" stroke="#2d8a3b" stroke-width="1.8" fill="none"/><path d="M1668 324l-3.6 12h7.2z" fill="#2d8a3b"/><path d="M1668 478l-3.6 -12h7.2z" fill="#2d8a3b"/><path d="M1668 480l-3.6 12h7.2z" fill="#2d8a3b"/><path d="M1668 556l-3.6 -12h7.2z" fill="#2d8a3b"/><path d="M1668 558l-3.6 12h7.2z" fill="#2d8a3b"/><path d="M1668 634l-3.6 -12h7.2z" fill="#2d8a3b"/><path d="M1668 636l-3.6 12h7.2z" fill="#2d8a3b"/><path d="M1668 712l-3.6 -12h7.2z" fill="#2d8a3b"/><path d="M1668 714l-3.6 12h7.2z" fill="#2d8a3b"/><path d="M1668 790l-3.6 -12h7.2z" fill="#2d8a3b"/><path d="M1668 792l-3.6 12h7.2z" fill="#2d8a3b"/><path d="M1668 946l-3.6 -12h7.2z" fill="#2d8a3b"/><path d="M937 323L1003 323" stroke="#2d8a3b" stroke-width="1.8" fill="none"/><circle cx="918" cy="323" r="19.2" fill="#fff" stroke="#2d8a3b" stroke-width="1.7"/><path d="M937 479L1003 479" stroke="#2d8a3b" stroke-width="1.8" fill="none"/><circle cx="918" cy="479" r="19.2" fill="#fff" stroke="#2d8a3b" stroke-width="1.7"/><path d="M937 557L1003 557" stroke="#2d8a3b" stroke-width="1.8" fill="none"/><circle cx="918" cy="557" r="19.2" fill="#fff" stroke="#2d8a3b" stroke-width="1.7"/><path d="M937 635L1003 635" stroke="#2d8a3b" stroke-width="1.8" fill="none"/><circle cx="918" cy="635" r="19.2" fill="#fff" stroke="#2d8a3b" stroke-width="1.7"/><path d="M937 713L1003 713" stroke="#2d8a3b" stroke-width="1.8" fill="none"/><circle cx="918" cy="713" r="19.2" fill="#fff" stroke="#2d8a3b" stroke-width="1.7"/><path d="M937 791L1003 791" stroke="#2d8a3b" stroke-width="1.8" fill="none"/><circle cx="918" cy="791" r="19.2" fill="#fff" stroke="#2d8a3b" stroke-width="1.7"/><path d="M937 947L1003 947" stroke="#2d8a3b" stroke-width="1.8" fill="none"/><circle cx="918" cy="947" r="19.2" fill="#fff" stroke="#2d8a3b" stroke-width="1.7"/><path d="M962 323L962 947" stroke="#2d8a3b" stroke-width="2" fill="none"/><path d="M962 324l-3.6 12h7.2z" fill="#2d8a3b"/><path d="M962 946l-3.6 -12h7.2z" fill="#2d8a3b"/><path d="M1003 947L1003 1012" stroke="#2d8a3b" stroke-width="1.8" fill="none"/><circle cx="1003" cy="1031" r="19.2" fill="#fff" stroke="#2d8a3b" stroke-width="1.7"/><path d="M1159 947L1159 1012" stroke="#2d8a3b" stroke-width="1.8" fill="none"/><circle cx="1159" cy="1031" r="19.2" fill="#fff" stroke="#2d8a3b" stroke-width="1.7"/><path d="M1237 947L1237 1012" stroke="#2d8a3b" stroke-width="1.8" fill="none"/><circle cx="1237" cy="1031" r="19.2" fill="#fff" stroke="#2d8a3b" stroke-width="1.7"/><path d="M1315 947L1315 1012" stroke="#2d8a3b" stroke-width="1.8" fill="none"/><circle cx="1315" cy="1031" r="19.2" fill="#fff" stroke="#2d8a3b" stroke-width="1.7"/><path d="M1393 947L1393 1012" stroke="#2d8a3b" stroke-width="1.8" fill="none"/><circle cx="1393" cy="1031" r="19.2" fill="#fff" stroke="#2d8a3b" stroke-width="1.7"/><path d="M1471 947L1471 1012" stroke="#2d8a3b" stroke-width="1.8" fill="none"/><circle cx="1471" cy="1031" r="19.2" fill="#fff" stroke="#2d8a3b" stroke-width="1.7"/><path d="M1627 947L1627 1012" stroke="#2d8a3b" stroke-width="1.8" fill="none"/><circle cx="1627" cy="1031" r="19.2" fill="#fff" stroke="#2d8a3b" stroke-width="1.7"/><path d="M1003 989L1627 989" stroke="#2d8a3b" stroke-width="2" fill="none"/><path d="M1004 989l12 -3.6v7.2z" fill="#2d8a3b"/><path d="M1626 989l-12 -3.6v7.2z" fill="#2d8a3b"/></svg>
<div class="t" style="left:918.4px;top:314.2px;font-size:17.5px;color:#2d8a3b;letter-spacing:0.8px;-webkit-text-stroke:0.25px #2d8a3b;transform:translateX(-50%)">E</div>
<div class="t" style="left:919.1px;top:470.7px;font-size:16.5px;color:#2d8a3b;letter-spacing:2.2px;-webkit-text-stroke:0.25px #2d8a3b;transform:translateX(-50%)">D.5</div>
<div class="t" style="left:918.4px;top:548.2px;font-size:17.5px;color:#2d8a3b;letter-spacing:0.8px;-webkit-text-stroke:0.25px #2d8a3b;transform:translateX(-50%)">D</div>
<div class="t" style="left:918.4px;top:626.2px;font-size:17.5px;color:#2d8a3b;letter-spacing:0.8px;-webkit-text-stroke:0.25px #2d8a3b;transform:translateX(-50%)">C</div>
<div class="t" style="left:918.4px;top:704.2px;font-size:17.5px;color:#2d8a3b;letter-spacing:0.8px;-webkit-text-stroke:0.25px #2d8a3b;transform:translateX(-50%)">B</div>
<div class="t" style="left:919.1px;top:782.7px;font-size:16.5px;color:#2d8a3b;letter-spacing:2.2px;-webkit-text-stroke:0.25px #2d8a3b;transform:translateX(-50%)">A.5</div>
<div class="t" style="left:918.4px;top:938.2px;font-size:17.5px;color:#2d8a3b;letter-spacing:0.8px;-webkit-text-stroke:0.25px #2d8a3b;transform:translateX(-50%)">A</div>
<div class="t" style="left:1003.4px;top:1022.2px;font-size:17.5px;color:#2d8a3b;letter-spacing:0.8px;-webkit-text-stroke:0.25px #2d8a3b;transform:translateX(-50%)">1</div>
<div class="t" style="left:1160.1px;top:1022.7px;font-size:16.5px;color:#2d8a3b;letter-spacing:2.2px;-webkit-text-stroke:0.25px #2d8a3b;transform:translateX(-50%)">1.5</div>
<div class="t" style="left:1237.4px;top:1022.2px;font-size:17.5px;color:#2d8a3b;letter-spacing:0.8px;-webkit-text-stroke:0.25px #2d8a3b;transform:translateX(-50%)">2</div>
<div class="t" style="left:1315.4px;top:1022.2px;font-size:17.5px;color:#2d8a3b;letter-spacing:0.8px;-webkit-text-stroke:0.25px #2d8a3b;transform:translateX(-50%)">3</div>
<div class="t" style="left:1393.4px;top:1022.2px;font-size:17.5px;color:#2d8a3b;letter-spacing:0.8px;-webkit-text-stroke:0.25px #2d8a3b;transform:translateX(-50%)">4</div>
<div class="t" style="left:1472.1px;top:1022.7px;font-size:16.5px;color:#2d8a3b;letter-spacing:2.2px;-webkit-text-stroke:0.25px #2d8a3b;transform:translateX(-50%)">4.5</div>
<div class="t" style="left:1627.4px;top:1022.2px;font-size:17.5px;color:#2d8a3b;letter-spacing:0.8px;-webkit-text-stroke:0.25px #2d8a3b;transform:translateX(-50%)">5</div>
<div class="t" style="left:1081.8px;top:260.9px;font-size:18.2px;color:#2d8a3b;letter-spacing:1.6px;-webkit-text-stroke:0.3px #2d8a3b;transform:translateX(-50%)">24 in</div>
<div class="t" style="left:1657px;top:401.0px;font-size:18.2px;color:#2d8a3b;letter-spacing:1.6px;-webkit-text-stroke:0.3px #2d8a3b;transform:translate(-50%,-50%) rotate(-90deg)">24 in</div>
<div class="t" style="left:1198.8px;top:260.9px;font-size:18.2px;color:#2d8a3b;letter-spacing:1.6px;-webkit-text-stroke:0.3px #2d8a3b;transform:translateX(-50%)">12 in</div>
<div class="t" style="left:1657px;top:518.0px;font-size:18.2px;color:#2d8a3b;letter-spacing:1.6px;-webkit-text-stroke:0.3px #2d8a3b;transform:translate(-50%,-50%) rotate(-90deg)">12 in</div>
<div class="t" style="left:1276.8px;top:260.9px;font-size:18.2px;color:#2d8a3b;letter-spacing:1.6px;-webkit-text-stroke:0.3px #2d8a3b;transform:translateX(-50%)">12 in</div>
<div class="t" style="left:1657px;top:596.0px;font-size:18.2px;color:#2d8a3b;letter-spacing:1.6px;-webkit-text-stroke:0.3px #2d8a3b;transform:translate(-50%,-50%) rotate(-90deg)">12 in</div>
<div class="t" style="left:1354.8px;top:260.9px;font-size:18.2px;color:#2d8a3b;letter-spacing:1.6px;-webkit-text-stroke:0.3px #2d8a3b;transform:translateX(-50%)">12 in</div>
<div class="t" style="left:1657px;top:674.0px;font-size:18.2px;color:#2d8a3b;letter-spacing:1.6px;-webkit-text-stroke:0.3px #2d8a3b;transform:translate(-50%,-50%) rotate(-90deg)">12 in</div>
<div class="t" style="left:1432.8px;top:260.9px;font-size:18.2px;color:#2d8a3b;letter-spacing:1.6px;-webkit-text-stroke:0.3px #2d8a3b;transform:translateX(-50%)">12 in</div>
<div class="t" style="left:1657px;top:752.0px;font-size:18.2px;color:#2d8a3b;letter-spacing:1.6px;-webkit-text-stroke:0.3px #2d8a3b;transform:translate(-50%,-50%) rotate(-90deg)">12 in</div>
<div class="t" style="left:1549.8px;top:260.9px;font-size:18.2px;color:#2d8a3b;letter-spacing:1.6px;-webkit-text-stroke:0.3px #2d8a3b;transform:translateX(-50%)">24 in</div>
<div class="t" style="left:1657px;top:869.0px;font-size:18.2px;color:#2d8a3b;letter-spacing:1.6px;-webkit-text-stroke:0.3px #2d8a3b;transform:translate(-50%,-50%) rotate(-90deg)">24 in</div>
<div class="t" style="left:972px;top:636px;font-size:18.2px;color:#2d8a3b;letter-spacing:1.6px;-webkit-text-stroke:0.3px #2d8a3b;transform:translate(-50%,-50%) rotate(-90deg)">96 in</div>
<div class="t" style="left:1314.8px;top:967.4px;font-size:18.2px;color:#2d8a3b;letter-spacing:1.6px;-webkit-text-stroke:0.3px #2d8a3b;transform:translateX(-50%)">96 in</div>
<svg style="left:0px;top:0px" width="1" height="1" viewBox="0 0 1 1"><path d="M1382 492h5v291h-5z" fill="#dfe8f6"/><path d="M1383 559l11 6v141l-11 7z" fill="#dcdcdc"/><path d="M1394 565h70v135l-7 7h-63z" fill="#f3f2f3"/><rect x="1383" y="604" width="43" height="11" fill="#cbcbcb"/><rect x="1383" y="656" width="43" height="11" fill="#cbcbcb"/><path d="M1383 635h81" stroke="#9ab59c" stroke-width="1.6"/></svg>
<div class="abs" style="left:1013px;top:400px;width:369px;height:556px;background:#fff;border:1px solid #6f9fe0;box-shadow:0 4px 14px rgba(0,0,0,.32),0 0 3px rgba(0,0,0,.25)"></div>
<svg style="left:1024px;top:409px" width="21" height="20" viewBox="0 0 21 20"><rect width="21" height="20" fill="#3a3a96"/><rect width="8" height="20" fill="#2a2a80"/><path d="M4 2v16M7.500 2v16" stroke="#b8b8e6" stroke-width="1.3"/><path d="M11 2l3 7 3-7" stroke="#dcdcff" stroke-width="1.8" fill="none"/><rect x="10.500" y="11" width="8" height="7" fill="#5c5cb4"/></svg>
<div class="t" style="left:1051px;top:413.0px;font-size:14.8px;color:#1c1c1c;letter-spacing:-0.02px;">Design Rebar Patterns</div>
<svg style="left:1354px;top:412px" width="14" height="14" viewBox="0 0 14 14"><path d="M1 1l12 12M13 1L1 13" stroke="#222" stroke-width="1.5"/></svg>
<div class="abs" style="left:1036px;top:465px;width:323px;height:105px;border:1px solid #dcdcdc;border-radius:2px"></div>
<div class="abs" style="left:1041px;top:456px;width:184px;height:18px;background:#fff"></div>
<div class="t" style="left:1045.5px;top:458.3px;font-size:15.1px;color:#3a3a3a;letter-spacing:0.02px;">Add a New Rebar Pattern</div>
<div class="t" style="left:1049px;top:491.5px;font-size:14.8px;color:#1c1c1c;letter-spacing:-0.42px;">Bar Size</div>
<div class="abs" style="left:1108px;top:486px;width:65px;height:25px;background:#e5e5e5;border:1px solid #adadad"></div>
<div class="t" style="left:1115px;top:492.0px;font-size:14.8px;color:#1c1c1c;">#3</div>
<svg style="left:1154px;top:494px" width="10" height="7" viewBox="0 0 10 7"><path d="M1 1l3.500 3.500 3.500-3.500" fill="none" stroke="#555" stroke-width="1.300"/></svg>
<div class="t" style="left:1192.7px;top:491.5px;font-size:14.8px;color:#1c1c1c;letter-spacing:0.00px;">Spacing</div>
<div class="abs" style="left:1252px;top:482px;width:100px;height:33px;background:#fff;border:1px solid #b4b4b4;border-bottom-color:#8a8a8a"></div>
<div class="t" style="left:1258px;top:491.5px;font-size:14.8px;color:#1c1c1c;">12 in</div>
<div class="abs" style="left:1133px;top:528px;width:129px;height:30px;background:#f1f1f1;border:1px solid #c6c6c6"></div>
<div class="t" style="left:1197.5px;top:537.0px;font-size:14.8px;color:#989898;transform:translateX(-50%);letter-spacing:0.28px;">Add Pattern</div>
<div class="t" style="left:1041.3px;top:584.0px;font-size:14.8px;color:#3a3a3a;letter-spacing:0.05px;">My Rebar Patterns</div>
<div class="abs" style="left:1035px;top:607px;width:323px;height:258px;background:#fff;border:1px solid #b2b2b2"></div>
<div class="t" style="left:1043.8px;top:615.9px;font-size:15px;color:#1c1c1c;letter-spacing:0.02px;">#3 @ 12-in o.c.</div>
<div class="t" style="left:1167.2px;top:616.0px;font-size:14.8px;color:#1c1c1c;letter-spacing:0.90px;">0.11 in^2/ft</div>
<div class="t" style="left:1043.8px;top:641.8px;font-size:15px;color:#1c1c1c;letter-spacing:0.02px;">#4 @ 12-in o.c.</div>
<div class="t" style="left:1167.2px;top:641.9px;font-size:14.8px;color:#1c1c1c;letter-spacing:0.83px;">0.2 in^2/ft</div>
<div class="t" style="left:1043.8px;top:667.7px;font-size:15px;color:#1c1c1c;letter-spacing:0.02px;">#5 @ 12-in o.c.</div>
<div class="t" style="left:1167.2px;top:667.8px;font-size:14.8px;color:#1c1c1c;letter-spacing:0.80px;">0.31 in^2/ft</div>
<div class="t" style="left:1043.8px;top:693.6px;font-size:15px;color:#1c1c1c;letter-spacing:0.02px;">#6 @ 12-in o.c.</div>
<div class="t" style="left:1167.2px;top:693.7px;font-size:14.8px;color:#1c1c1c;letter-spacing:0.80px;">0.44 in^2/ft</div>
<div class="abs" style="left:1040px;top:905px;width:199px;height:31px;background:#f1f1f1;border:1px solid #c6c6c6"></div>
<div class="t" style="left:1139.5px;top:913.4px;font-size:14.9px;color:#989898;transform:translateX(-50%);letter-spacing:0.01px;">Remove Selected Pattern</div>
<div class="abs" style="left:1252px;top:905px;width:97px;height:31px;background:#e1e1e1;border:1px solid #8a8a8a"></div>
<div class="t" style="left:1300px;top:913.5px;font-size:14.8px;color:#1c1c1c;transform:translateX(-50%);">Close</div>
<svg style="left:1216px;top:737px" width="17" height="26" viewBox="0 0 17 26"><path d="M1 1v20l4.600-4.400 3.700 8.400 3-1.300-3.700-8.200h6.400z" fill="#fff" stroke="#222" stroke-width="1.200" stroke-linejoin="round"/></svg>
<svg style="left:0px;top:0px" width="1" height="1" viewBox="0 0 1 1"><path d="M1005 1079.500h23M1005 1085h23M1005 1090.500h23" stroke="#1a1a1a" stroke-width="2.600"/><path d="M1055 1090.500h66" stroke="#111" stroke-width="6" stroke-dasharray="3.800 2.200"/><rect x="1229" y="1083" width="26" height="13" fill="#fa0808"/><rect x="1333" y="1083" width="39" height="13" fill="#0afaee"/><path d="M1476 1090.500h65" stroke="#e01020" stroke-width="6" stroke-dasharray="3.800 2.200"/></svg>
<div class="t" style="left:1029px;top:1080.6px;font-size:13.5px;color:#333;">0</div>
<div class="t" style="left:1122px;top:1084.0px;font-size:14.8px;color:#333;letter-spacing:0.31px;">-Ungrouped</div>
<div class="t" style="left:1257px;top:1084.0px;font-size:14.8px;color:#333;letter-spacing:-0.04px;">-Failed</div>
<div class="t" style="left:1386px;top:1084.0px;font-size:14.8px;color:#333;letter-spacing:0.62px;">-Warning</div>
<div class="t" style="left:1542px;top:1084.0px;font-size:14.8px;color:#333;letter-spacing:-0.36px;">-Error</div>
<div class="abs" style="left:1032px;top:1105px;width:8px;height:23px;background:#0a0805"></div>
<div class="abs" style="left:1040px;top:1105px;width:5px;height:23px;background:#e6e6f2"></div>
<div class="abs" style="left:1569px;top:1105px;width:4px;height:23px;background:#e0e6e0"></div>
<div class="abs" style="left:1573px;top:1105px;width:8px;height:23px;background:#050505"></div>
<div class="abs" style="left:1045px;top:1105px;width:524px;height:23px;background:linear-gradient(90deg,#0000fa 0%,#0212e0 20%,#0a32a4 47%,#0a5062 63%,#0a6a3a 77%,#0a8a04 98%,#0a8c00 100%)"></div>
<div class="t" style="left:1032px;top:1132.3px;font-size:14px;color:#333;">0</div>
<div class="t" style="left:1565px;top:1132.3px;font-size:14px;color:#333;">1</div>
<div class="t" style="left:1305.5px;top:1132.1px;font-size:14.6px;color:#222;transform:translateX(-50%);letter-spacing:0.17px;">Design Unity Value</div>
<svg style="left:0px;top:0px" width="1" height="1" viewBox="0 0 1 1"><rect x="574" y="1062" width="51" height="51" fill="#e9e9e9" stroke="#a4a4a4" stroke-width="2.400"/><circle cx="625" cy="1062" r="2.200" fill="#8a8a8a"/><path d="M572 1114v-60" stroke="#1a7a2a" stroke-width="2.600"/><path d="M572 1047l-6 10h12z" fill="#1a7a2a"/><path d="M572 1115h58" stroke="#c81424" stroke-width="2.600"/><path d="M640 1115l-10-6v12z" fill="#c81424"/><circle cx="572" cy="1115" r="6.500" fill="#0a0ac0"/></svg>
<div class="t" style="left:565px;top:1027px;font-family:'Liberation Serif',serif;font-size:15px;color:#2a7a3a">Y</div>
<div class="t" style="left:645px;top:1107px;font-family:'Liberation Serif',serif;font-size:15px;color:#c81424">X</div>
<div class="t" style="left:587px;top:1080px;font-family:'Liberation Serif',serif;font-size:15px;color:#333">Top</div>
<div class="abs" style="left:2068px;top:193px;width:320px;height:1162px;background:#fff;border:1px solid #dcdcdc"></div>
<div class="abs" style="left:2069px;top:194px;width:318px;height:26px;background:#f3f3f3"></div>
<div class="t" style="left:2075.5px;top:200.8px;font-size:15.2px;color:#6a6a6a;letter-spacing:-0.17px;">Project Status</div>
<div class="dots" style="left:2178px;top:201px;width:160px"></div>
<div class="abs" style="left:2348px;top:207px;border:4.500px solid transparent;border-top:5px solid #444;border-bottom:0"></div>
<svg style="left:2369px;top:200px" width="9" height="13" viewBox="0 0 9 13"><path d="M2.500 0.500h4v6h-4zM1 6.500h7M4.500 6.500v6" fill="none" stroke="#444" stroke-width="1.200"/><path d="M5.500 1v5" stroke="#444" stroke-width="1.400"/></svg>
<div class="t" style="left:2078.5px;top:226.7px;font-size:15px;color:#27277c;font-weight:bold;letter-spacing:0.02px;">Model Status</div>
<svg style="left:2073px;top:247.12px" width="18" height="14" viewBox="0 0 18 14"><path d="M1.500 7.500l5.500 5 9.500-11" fill="none" stroke="#2f9e7c" stroke-width="3.400" stroke-linejoin="miter"/></svg>
<div class="t" style="left:2099px;top:247.1px;font-size:14.8px;color:#1e1e1e;letter-spacing:0.32px;">Meshing Done</div>
<svg style="left:2073px;top:267.44px" width="18" height="14" viewBox="0 0 18 14"><path d="M1.500 7.500l5.500 5 9.500-11" fill="none" stroke="#2f9e7c" stroke-width="3.400" stroke-linejoin="miter"/></svg>
<div class="t" style="left:2099px;top:267.4px;font-size:14.8px;color:#1e1e1e;letter-spacing:-0.12px;">Boundary Exists</div>
<svg style="left:2073px;top:287.76px" width="18" height="14" viewBox="0 0 18 14"><path d="M1.500 7.500l5.500 5 9.500-11" fill="none" stroke="#2f9e7c" stroke-width="3.400" stroke-linejoin="miter"/></svg>
<div class="t" style="left:2099px;top:287.7px;font-size:14.8px;color:#1e1e1e;letter-spacing:0.31px;">Model OK</div>
<svg style="left:2073px;top:308.08px" width="18" height="14" viewBox="0 0 18 14"><path d="M1.500 7.500l5.500 5 9.500-11" fill="none" stroke="#2f9e7c" stroke-width="3.400" stroke-linejoin="miter"/></svg>
<div class="t lnk" style="left:2099px;top:308.1px;font-size:14.8px;color:#1e1e1e;letter-spacing:-0.20px;">Load Status (1 cases)</div>
<svg style="left:2073px;top:328.4px" width="18" height="14" viewBox="0 0 18 14"><path d="M1.500 7.500l5.500 5 9.500-11" fill="none" stroke="#2f9e7c" stroke-width="3.400" stroke-linejoin="miter"/></svg>
<div class="t lnk" style="left:2099px;top:328.4px;font-size:14.8px;color:#1e1e1e;letter-spacing:0.16px;">Stability Unity: &lt; 0.1</div>
<div class="t" style="left:2078.5px;top:348.6px;font-size:15px;color:#27277c;font-weight:bold;letter-spacing:-0.68px;">FEA Results</div>
<svg style="left:2073px;top:369.03999999999996px" width="18" height="14" viewBox="0 0 18 14"><path d="M1.500 7.500l5.500 5 9.500-11" fill="none" stroke="#2f9e7c" stroke-width="3.400" stroke-linejoin="miter"/></svg>
<div class="t lnk" style="left:2099px;top:369.0px;font-size:14.8px;color:#1e1e1e;letter-spacing:0.03px;">Analysis Done</div>
<svg style="left:2073px;top:389.35999999999996px" width="18" height="14" viewBox="0 0 18 14"><path d="M1.500 7.500l5.500 5 9.500-11" fill="none" stroke="#2f9e7c" stroke-width="3.400" stroke-linejoin="miter"/></svg>
<div class="t lnk" style="left:2099px;top:389.3px;font-size:14.8px;color:#1e1e1e;letter-spacing:-0.12px;">Statics Check OK</div>
<div class="t" style="left:2078.5px;top:409.6px;font-size:15px;color:#27277c;font-weight:bold;letter-spacing:-0.32px;">Design</div>
<svg style="left:2073px;top:429.99999999999994px" width="18" height="14" viewBox="0 0 18 14"><path d="M1.500 7.500l5.500 5 9.500-11" fill="none" stroke="#2f9e7c" stroke-width="3.400" stroke-linejoin="miter"/></svg>
<div class="t lnk" style="left:2099px;top:430.0px;font-size:14.8px;color:#1e1e1e;letter-spacing:0.01px;">Design Done</div>
<div class="t" style="left:2078.5px;top:450.2px;font-size:15px;color:#27277c;font-weight:bold;letter-spacing:-0.35px;">Plate Checks</div>
<svg style="left:2073px;top:470.63999999999993px" width="18" height="14" viewBox="0 0 18 14"><path d="M1.500 7.500l5.500 5 9.500-11" fill="none" stroke="#2f9e7c" stroke-width="3.400" stroke-linejoin="miter"/></svg>
<div class="t lnk" style="left:2099px;top:470.6px;font-size:14.8px;color:#1e1e1e;letter-spacing:-0.12px;">Soil Bearing (0.54)</div>
<svg style="left:2073px;top:490.9599999999999px" width="18" height="14" viewBox="0 0 18 14"><path d="M1.500 7.500l5.500 5 9.500-11" fill="none" stroke="#2f9e7c" stroke-width="3.400" stroke-linejoin="miter"/></svg>
<div class="t lnk" style="left:2099px;top:490.9px;font-size:14.8px;color:#1e1e1e;letter-spacing:-0.03px;">Punching Shear (0.81)</div>
<svg style="left:2073px;top:511.28px" width="18" height="14" viewBox="0 0 18 14"><path d="M1.500 7.500l5.500 5 9.500-11" fill="none" stroke="#2f9e7c" stroke-width="3.400" stroke-linejoin="miter"/></svg>
<div class="t lnk" style="left:2099px;top:511.2px;font-size:14.8px;color:#1e1e1e;letter-spacing:-0.32px;">Slab Flexural Steel (Pass)</div>
<svg style="left:2073px;top:531.6px" width="18" height="14" viewBox="0 0 18 14"><path d="M1.500 7.500l5.500 5 9.500-11" fill="none" stroke="#2f9e7c" stroke-width="3.400" stroke-linejoin="miter"/></svg>
<div class="t lnk" style="left:2099px;top:531.6px;font-size:14.8px;color:#1e1e1e;letter-spacing:-0.38px;">Slab Shear (0.96)</div>
<div class="t" style="left:2078.5px;top:551.8px;font-size:15px;color:#27277c;font-weight:bold;letter-spacing:-0.20px;">Pier &amp; Pile Checks</div>
<svg style="left:2073px;top:572.2400000000001px" width="18" height="14" viewBox="0 0 18 14"><path d="M1.500 7.500l5.500 5 9.500-11" fill="none" stroke="#2f9e7c" stroke-width="3.400" stroke-linejoin="miter"/></svg>
<div class="t lnk" style="left:2099px;top:572.2px;font-size:14.8px;color:#1e1e1e;letter-spacing:-0.06px;">Pile Capacity (0.91)</div>
<div class="abs" style="left:528px;top:1169px;width:1531px;height:186px;background:#f3f3f3;border:1px solid #dcdcdc"></div>
<div class="t" style="left:535px;top:1177.8px;font-size:15.2px;color:#6a6a6a;letter-spacing:0.11px;">Find Tool</div>
<div class="dots" style="left:608px;top:1178px;width:1404px"></div>
<div class="abs" style="left:2021px;top:1183px;border:4.500px solid transparent;border-top:5px solid #444;border-bottom:0"></div>
<svg style="left:2040px;top:1177px" width="9" height="13" viewBox="0 0 9 13"><path d="M2.500 0.500h4v6h-4zM1 6.500h7M4.500 6.500v6" fill="none" stroke="#444" stroke-width="1.200"/><path d="M5.500 1v5" stroke="#444" stroke-width="1.400"/></svg>
<div class="abs" style="left:529px;top:1199px;width:1529px;height:30px;background:#fff"></div>
<div class="tab" style="left:693px;top:1201px;width:183px;height:26px;border:1px solid #c4c4c4;background:linear-gradient(#f3f3f3,#e9e9e9)"></div>
<div class="t" style="left:699px;top:1206.3px;font-size:15.1px;color:#1e1e1e;letter-spacing:-0.05px;">Punching Shear Capacity</div>
<div class="tab" style="left:877px;top:1201px;width:103px;height:26px;border:1px solid #c4c4c4;background:linear-gradient(#f3f3f3,#e9e9e9)"></div>
<div class="t" style="left:884.3px;top:1206.4px;font-size:15px;color:#1e1e1e;letter-spacing:-0.26px;">Shear Design</div>
<div class="tab" style="left:981px;top:1201px;width:218px;height:26px;border:1px solid #c4c4c4;background:linear-gradient(#f3f3f3,#e9e9e9)"></div>
<div class="t" style="left:987.7px;top:1206.4px;font-size:15px;color:#1e1e1e;letter-spacing:-0.07px;">Slab Flexure Design: Bottom X</div>
<div class="tab" style="left:1200px;top:1201px;width:217px;height:26px;border:1px solid #c4c4c4;background:linear-gradient(#f3f3f3,#e9e9e9)"></div>
<div class="t" style="left:1206px;top:1206.4px;font-size:15px;color:#1e1e1e;letter-spacing:-0.07px;">Slab Flexure Design: Bottom Y</div>
<div class="tab" style="left:1418px;top:1201px;width:192px;height:26px;border:1px solid #c4c4c4;background:linear-gradient(#f3f3f3,#e9e9e9)"></div>
<div class="t" style="left:1424.7px;top:1206.4px;font-size:15px;color:#1e1e1e;letter-spacing:-0.15px;">Slab Flexure Design: Top X</div>
<div class="tab" style="left:1611px;top:1201px;width:191px;height:26px;border:1px solid #c4c4c4;background:linear-gradient(#f3f3f3,#e9e9e9)"></div>
<div class="t" style="left:1617.6px;top:1206.4px;font-size:15px;color:#1e1e1e;letter-spacing:-0.15px;">Slab Flexure Design: Top Y</div>
<div class="tab" style="left:1803px;top:1201px;width:158px;height:26px;border:1px solid #c4c4c4;background:linear-gradient(#f3f3f3,#e9e9e9)"></div>
<div class="t" style="left:1810px;top:1206.4px;font-size:15px;color:#1e1e1e;letter-spacing:0.03px;">Soil Bearing Capacity</div>
<div class="abs" style="left:531px;top:1229px;width:1525px;height:123px;background:#fff;border:1px solid #b8b8b8;box-shadow:0 0 0 1px #e4e4e4"></div>
<div class="tab act" style="left:529px;top:1198px;width:164px;height:32px;border-color:#d0d0d0"></div>
<div class="t" style="left:538.3px;top:1205.8px;font-size:15.1px;color:#1e1e1e;letter-spacing:-0.05px;">Pile Design Summary</div>
<div class="abs" style="left:532px;top:1230px;width:1498px;height:30px;background:linear-gradient(#fff,#fbfbfb 50%,#efefef)"></div>
<div class="t" style="left:539.3px;top:1239.4px;font-size:14.9px;color:#1e1e1e;letter-spacing:-0.05px;">Pile</div>
<div class="t" style="left:580.7px;top:1239.4px;font-size:14.9px;color:#1e1e1e;letter-spacing:0.69px;">Unity</div>
<div class="t" style="left:632.3px;top:1239.4px;font-size:14.9px;color:#1e1e1e;letter-spacing:0.25px;">Geotechnical Unity</div>
<div class="t" style="left:774.3px;top:1239.4px;font-size:14.9px;color:#1e1e1e;letter-spacing:0.30px;">Structural Unity</div>
<div class="t" style="left:893.3px;top:1239.4px;font-size:14.9px;color:#1e1e1e;letter-spacing:-0.19px;">Has Error(s)</div>
<div class="t" style="left:985px;top:1239.4px;font-size:14.9px;color:#1e1e1e;letter-spacing:0.16px;">Has Warning(s)</div>
<div class="abs" style="left:572px;top:1232px;width:1px;height:120px;background:#e4e4e4"></div>
<div class="abs" style="left:625px;top:1232px;width:1px;height:120px;background:#e4e4e4"></div>
<div class="abs" style="left:767px;top:1232px;width:1px;height:120px;background:#e4e4e4"></div>
<div class="abs" style="left:885px;top:1232px;width:1px;height:120px;background:#e4e4e4"></div>
<div class="abs" style="left:978px;top:1232px;width:1px;height:120px;background:#e4e4e4"></div>
<div class="abs" style="left:1096px;top:1232px;width:1px;height:120px;background:#e4e4e4"></div>
<div class="t" style="left:536.7px;top:1264.9px;font-size:14.6px;color:#1e1e1e;letter-spacing:-0.80px;">P001</div>
<div class="t" style="left:577.7px;top:1264.9px;font-size:14.6px;color:#1e1e1e;letter-spacing:-0.47px;">0.9004</div>
<div class="t" style="left:629.3px;top:1264.9px;font-size:14.6px;color:#1e1e1e;letter-spacing:-0.47px;">0.9004</div>
<div class="t" style="left:771.7px;top:1264.9px;font-size:14.6px;color:#1e1e1e;letter-spacing:-0.39px;">0.0125</div>
<div class="t" style="left:891px;top:1264.9px;font-size:14.6px;color:#1e1e1e;letter-spacing:1.04px;">No</div>
<div class="t" style="left:982.7px;top:1264.9px;font-size:14.6px;color:#1e1e1e;letter-spacing:1.04px;">No</div>
<div class="abs" style="left:532px;top:1283px;width:1498px;height:1px;background:#e6e6e6"></div>
<div class="t" style="left:536.7px;top:1288.2px;font-size:14.6px;color:#1e1e1e;letter-spacing:-0.80px;">P002</div>
<div class="t" style="left:577.7px;top:1288.2px;font-size:14.6px;color:#1e1e1e;letter-spacing:-0.47px;">0.9046</div>
<div class="t" style="left:629.3px;top:1288.2px;font-size:14.6px;color:#1e1e1e;letter-spacing:-0.47px;">0.9046</div>
<div class="t" style="left:771.7px;top:1288.2px;font-size:14.6px;color:#1e1e1e;letter-spacing:-0.39px;">0.0125</div>
<div class="t" style="left:891px;top:1288.2px;font-size:14.6px;color:#1e1e1e;letter-spacing:1.04px;">No</div>
<div class="t" style="left:982.7px;top:1288.2px;font-size:14.6px;color:#1e1e1e;letter-spacing:1.04px;">No</div>
<div class="abs" style="left:532px;top:1306px;width:1498px;height:1px;background:#e6e6e6"></div>
<div class="t" style="left:536.7px;top:1311.5px;font-size:14.6px;color:#1e1e1e;letter-spacing:-0.80px;">P003</div>
<div class="t" style="left:577.7px;top:1311.5px;font-size:14.6px;color:#1e1e1e;letter-spacing:-0.47px;">0.9062</div>
<div class="t" style="left:629.3px;top:1311.5px;font-size:14.6px;color:#1e1e1e;letter-spacing:-0.47px;">0.9062</div>
<div class="t" style="left:771.7px;top:1311.5px;font-size:14.6px;color:#1e1e1e;letter-spacing:-0.39px;">0.0126</div>
<div class="t" style="left:891px;top:1311.5px;font-size:14.6px;color:#1e1e1e;letter-spacing:1.04px;">No</div>
<div class="t" style="left:982.7px;top:1311.5px;font-size:14.6px;color:#1e1e1e;letter-spacing:1.04px;">No</div>
<div class="abs" style="left:532px;top:1329px;width:1498px;height:1px;background:#e6e6e6"></div>
<div class="t" style="left:536.7px;top:1334.8px;font-size:14.6px;color:#1e1e1e;letter-spacing:-0.80px;">P004</div>
<div class="t" style="left:577.7px;top:1334.8px;font-size:14.6px;color:#1e1e1e;letter-spacing:-0.47px;">0.9056</div>
<div class="t" style="left:629.3px;top:1334.8px;font-size:14.6px;color:#1e1e1e;letter-spacing:-0.47px;">0.9056</div>
<div class="t" style="left:771.7px;top:1334.8px;font-size:14.6px;color:#1e1e1e;letter-spacing:-0.39px;">0.0125</div>
<div class="t" style="left:891px;top:1334.8px;font-size:14.6px;color:#1e1e1e;letter-spacing:1.04px;">No</div>
<div class="t" style="left:982.7px;top:1334.8px;font-size:14.6px;color:#1e1e1e;letter-spacing:1.04px;">No</div>
<div class="abs" style="left:532px;top:1260px;width:1498px;height:1px;background:#e6e6e6"></div>
<div class="abs" style="left:2031px;top:1261px;width:21px;height:90px;background:#f0f0f0"></div>
<div class="abs" style="left:2032px;top:1283px;width:19px;height:33px;background:#c9c9c9"></div>
<svg style="left:2036px;top:1268px" width="11" height="7" viewBox="0 0 11 7"><path d="M1 6l4.500-4.500 4.500 4.500" fill="none" stroke="#8a8a8a" stroke-width="1.300"/></svg>
<svg style="left:2036px;top:1336px" width="11" height="7" viewBox="0 0 11 7"><path d="M1 1l4.500 4.500 4.500-4.500" fill="none" stroke="#8a8a8a" stroke-width="1.300"/></svg>
<div class="t" style="left:30px;top:1369.4px;font-size:15px;color:#2a2a2a;">Ready</div>
<div class="t" style="left:2168px;top:1369.6px;font-size:14.6px;color:#2a2a2a;">X:-120.00 in, Y:6.00 in, Z:0.00 in</div>
</body>
</html>
